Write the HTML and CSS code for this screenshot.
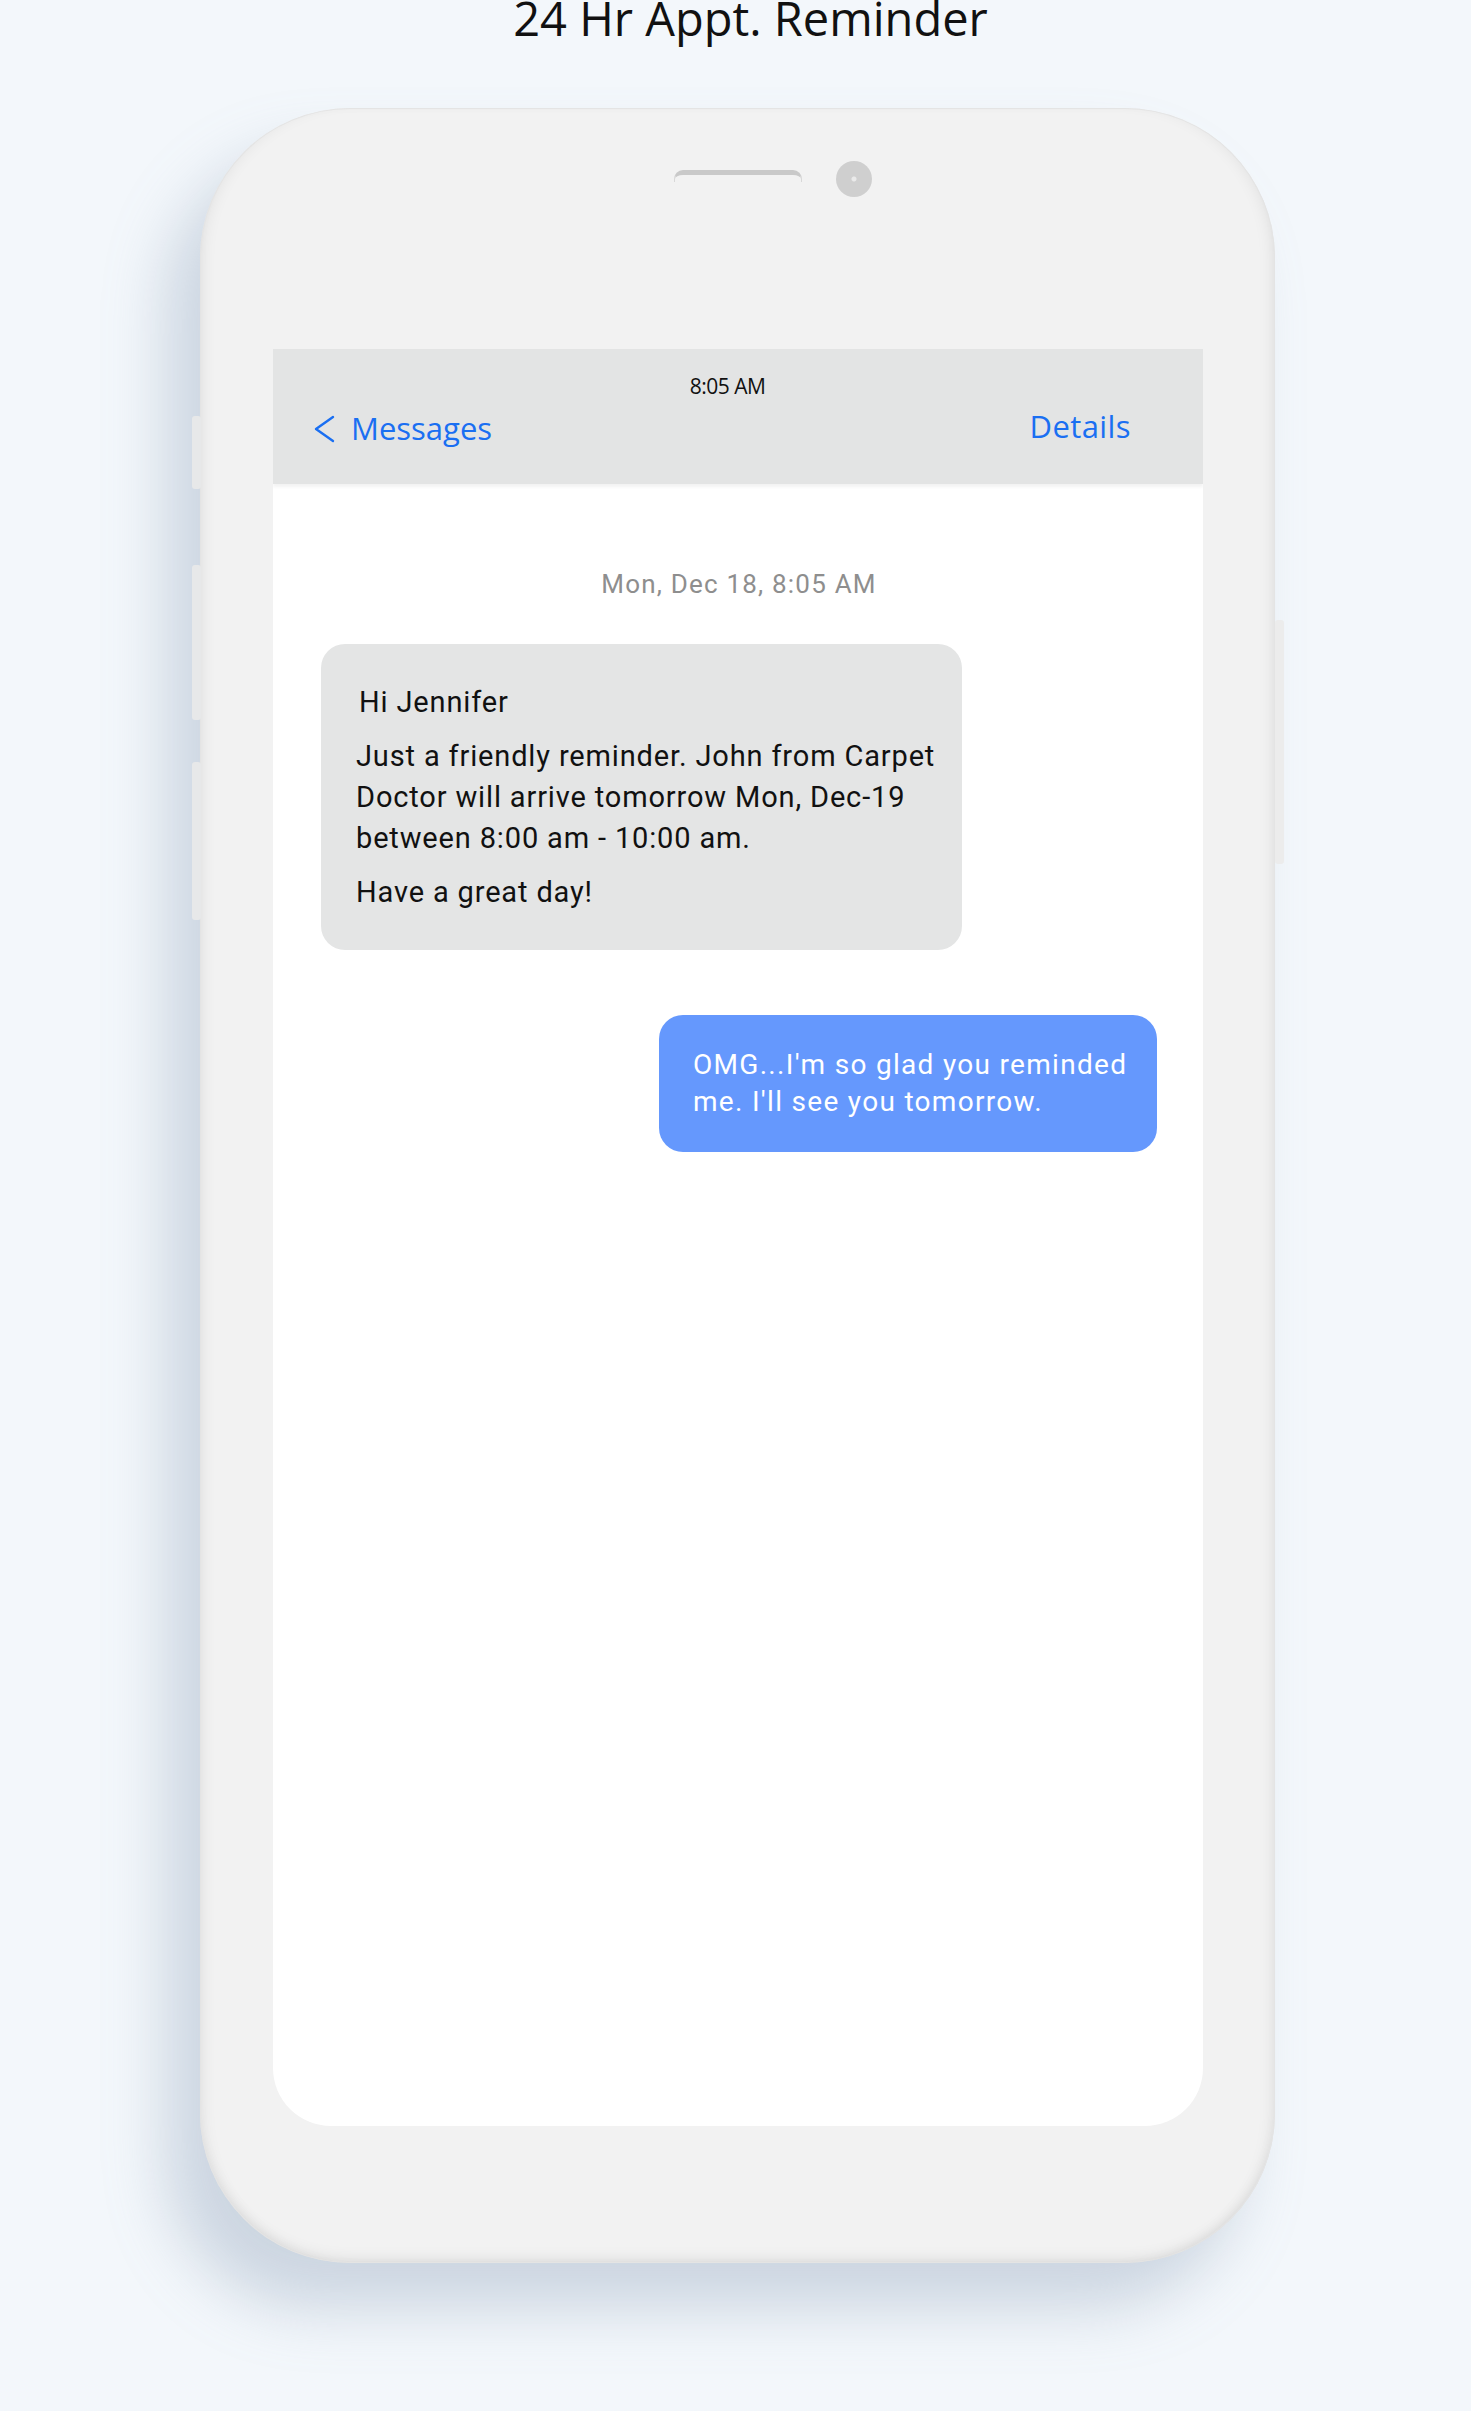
FILE: index.html
```html
<!DOCTYPE html>
<html lang="en">
<head>
  <meta charset="UTF-8">
  <meta name="viewport" content="width=device-width, initial-scale=1.0">
  <title>24 Hr Appt. Reminder</title>
  <link rel="stylesheet" href="styles.css">
</head>
<body>
  <main class="page">
    <h1 class="title">24 Hr Appt. Reminder</h1>

    <div class="phone">
      <span class="side-btn btn-mute"></span>
      <span class="side-btn btn-vol-up"></span>
      <span class="side-btn btn-vol-down"></span>
      <span class="side-btn btn-power"></span>

      <div class="phone-top">
        <span class="speaker"></span>
        <span class="camera"></span>
      </div>

      <div class="screen">
        <header class="msg-header">
          <div class="clock">8:05 AM</div>
          <nav class="msg-nav">
            <a href="#" class="back">
              <svg width="24" height="28" viewBox="0 0 24 28" aria-hidden="true">
                <path d="M21 2 L4 14 L21 26" fill="none" stroke="currentColor" stroke-width="2.4" stroke-linecap="round" stroke-linejoin="round"/>
              </svg>
              Messages
            </a>
            <a href="#" class="details">Details</a>
          </nav>
        </header>

        <section class="thread">
          <p class="stamp">Mon, Dec 18, 8:05 AM</p>

          <div class="bubble incoming">
            <p>Hi Jennifer</p>
            <p>Just a friendly reminder. John from Carpet<br>Doctor will arrive tomorrow Mon, Dec-19<br>between 8:00 am - 10:00 am.</p>
            <p>Have a great day!</p>
          </div>

          <div class="bubble outgoing">
            <p>OMG...I'm so glad you reminded<br>me. I'll see you tomorrow.</p>
          </div>
        </section>
      </div>
    </div>
  </main>
</body>
</html>
```

FILE: styles.css
```css
body {
  margin: 0;
  padding: 0;
  background-color: #f3f7fb;
  color: #111;
  font-family: "Open Sans", Arial, sans-serif;
  overflow: hidden;
}
.page {
  display: flex;
  flex-direction: column;
  align-items: center;
  height: 2411px;
}
.title {
  margin: -5px 0 0 30px;
  font-size: 47px;
  line-height: 47px;
  font-weight: 400;
  color: #111;
}

/* phone body */
.phone {
  position: relative;
  margin-top: 66px;
  margin-left: 4px;
  width: 1075px;
  box-sizing: border-box;
  padding: 0 72px 137px 73px;
  background-color: #f2f2f2;
  border-radius: 150px;
  box-shadow:
    inset 0 0 0 1px #e4e4e4,
    inset 10px 0 16px -8px rgba(0,0,0,0.07),
    inset -10px 0 16px -8px rgba(0,0,0,0.08),
    inset 0 -10px 16px -8px rgba(0,0,0,0.10),
    -34px 45px 60px rgba(135,155,180,0.36);
}
.side-btn {
  position: absolute;
  width: 9px;
  background-color: #e7e8e9;
  border-radius: 3px;
}
.btn-mute { left: -8px; top: 308px; height: 73px; }
.btn-vol-up { left: -8px; top: 457px; height: 155px; }
.btn-vol-down { left: -8px; top: 654px; height: 158px; }
.btn-power { right: -9px; top: 512px; height: 244px; background-color: #ececec; }

.phone-top {
  height: 241px;
  box-sizing: border-box;
  padding: 53px 0 0 70px;
  display: flex;
  justify-content: center;
  align-items: center;
  gap: 34px;
  align-content: flex-start;
  flex-wrap: wrap;
}
.speaker {
  width: 128px;
  height: 12px;
  box-sizing: border-box;
  border: 1px solid #d8d8d8;
  border-top: 5px solid #c9c9c9;
  border-bottom: none;
  border-radius: 9px 9px 0 0;
  margin-top: -6px;
}
.camera {
  width: 36px;
  height: 36px;
  border-radius: 50%;
  background: radial-gradient(circle, #eaeaea 0 2px, #cfcfcf 3px);
}

/* screen */
.screen {
  height: 1777px;
  background-color: #fff;
  border-radius: 0 0 58px 58px;
  overflow: hidden;
}
.msg-header {
  height: 135px;
  box-sizing: border-box;
  padding: 24px 72px 0 39px;
  background-color: #e3e4e4;
  box-shadow: 0 3px 3px rgba(0,0,0,0.05);
  position: relative;
}
.clock {
  text-align: center;
  font-size: 21px;
  line-height: 26px;
  margin-right: -12px;
  letter-spacing: -0.5px;
}
.msg-nav {
  display: flex;
  justify-content: space-between;
  align-items: center;
  margin-top: 9px;
}
.msg-nav a {
  display: flex;
  align-items: center;
  gap: 15px;
  color: #1a6ff2;
  text-decoration: none;
  font-size: 31px;
  line-height: 40px;
  letter-spacing: 0;
}
.msg-nav .back svg {
  margin-top: 2px;
}
.msg-nav .details {
  margin-top: -4px;
  letter-spacing: 0.4px;
}

/* conversation */
.thread {
  display: flex;
  flex-direction: column;
  padding: 85px 46px 0 48px;
  font-family: Roboto, Arial, sans-serif;
}
.stamp {
  margin: 0 0 45px;
  text-align: center;
  color: #8e8e8e;
  font-size: 26px;
  line-height: 30px;
  letter-spacing: 1.2px;
}
.bubble {
  box-sizing: border-box;
  border-radius: 24px;
}
.bubble p {
  margin: 0;
}
.incoming {
  align-self: flex-start;
  width: 641px;
  padding: 38px 10px 37px 35px;
  background-color: #e4e5e5;
  color: #111;
  font-size: 29px;
  line-height: 41px;
  letter-spacing: 0.85px;
}
.incoming p + p {
  margin-top: 13px;
}
.incoming p:first-child {
  padding-left: 3px;
}
.outgoing {
  align-self: flex-end;
  margin-top: 65px;
  width: 498px;
  padding: 31px 10px 32px 34px;
  background-color: #6598fd;
  color: #fff;
  font-size: 28px;
  line-height: 37px;
  letter-spacing: 1.3px;
}
```
